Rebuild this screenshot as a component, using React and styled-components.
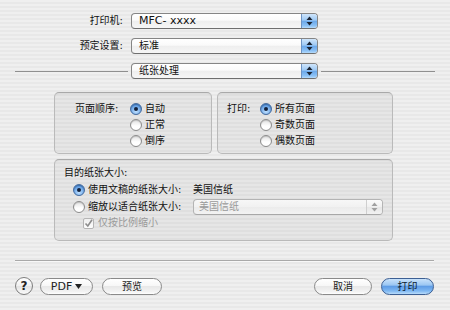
import React from 'react';
import styled, { createGlobalStyle, css } from 'styled-components';

const Global = createGlobalStyle`
  html, body { margin: 0; padding: 0; }
  body {
    font-family: "DejaVu Sans", "Noto Sans CJK SC", sans-serif;
    font-size: 10px;
    color: #111;
  }
`;

const Window = styled.div`
  width: 450px;
  height: 310px;
  box-sizing: border-box;
  padding: 13px 15px 0;
  display: flex;
  flex-direction: column;
  overflow: hidden;
  background: repeating-linear-gradient(to bottom, #efefef 0 2px, #e8e8e8 2px 4px);
`;

const Latin = styled.span`
  font-size: 11px;
`;

const Form = styled.div`
  display: grid;
  grid-template-columns: 110px 187px;
  column-gap: 6px;
  row-gap: 9px;
  align-items: center;
`;

const FieldLabel = styled.div`
  text-align: right;
  line-height: 16px;
  white-space: nowrap;
  padding-right: 2px;
`;

const PaneRow = styled.div`
  display: flex;
  align-items: center;
  margin-top: 9px;
`;

const Rule = styled.div`
  height: 1px;
  background: #8f8f8f;
  ${p => (p.$w ? `width:${p.$w}px;` : 'flex: 1;')}
  ${p => (p.$left ? 'margin-right: 3px;' : 'margin-left: 3px;')}
`;

const PopupBox = styled.div`
  box-sizing: border-box;
  width: ${p => p.$w || 187}px;
  height: 16px;
  display: flex;
  align-items: stretch;
  border: 1px solid ${p => (p.$disabled ? '#b4b4b4' : '#858585')};
  border-bottom-color: ${p => (p.$disabled ? '#a8a8a8' : '#6e6e6e')};
  border-radius: 4px;
  overflow: hidden;
  background: ${p =>
    p.$disabled
      ? 'linear-gradient(to bottom, #f7f7f7, #f1f1f1 50%, #ebebeb 51%, #f3f3f3)'
      : 'linear-gradient(to bottom, #ffffff, #fafafa 45%, #eeeeee 50%, #f6f6f6)'};
  flex-shrink: 0;
`;

const PopupText = styled.div`
  flex: 1;
  padding-left: ${p => (p.$disabled ? 5 : 7)}px;
  line-height: 14px;
  color: ${p => (p.$disabled ? '#9a9a9a' : '#111')};
  white-space: nowrap;
`;

const PopupArrows = styled.div`
  width: 15px;
  display: flex;
  align-items: center;
  justify-content: center;
  border-left: 1px solid ${p => (p.$disabled ? '#cfcfcf' : '#6d93c4')};
  background: ${p =>
    p.$disabled
      ? 'linear-gradient(to bottom, #fafafa, #f0f0f0 50%, #e6e6e6 51%, #f2f2f2)'
      : 'linear-gradient(to bottom, #cfe5fb 0%, #9cc8f4 45%, #6aa7ea 50%, #8cc2f6 85%, #b7dbfb 100%)'};
`;

const Arrows = ({ color }) => (
  <svg width="7" height="10" viewBox="0 0 7 10">
    <path d="M3.5 0.5 L6.5 4 L0.5 4 Z" fill={color} />
    <path d="M0.5 6 L6.5 6 L3.5 9.5 Z" fill={color} />
  </svg>
);

const Popup = ({ children, w, disabled }) => (
  <PopupBox $w={w} $disabled={disabled}>
    <PopupText $disabled={disabled}>{children}</PopupText>
    <PopupArrows $disabled={disabled}>
      <Arrows color={disabled ? '#a0a0a0' : '#1b2433'} />
    </PopupArrows>
  </PopupBox>
);

const GroupRow = styled.div`
  display: flex;
  gap: 5px;
  margin: ${p => p.$mt}px 0 0 39px;
`;

const Group = styled.div`
  box-sizing: border-box;
  width: ${p => p.$w}px;
  height: ${p => p.$h}px;
  border: 1px solid #bababa;
  border-top-color: #a9a9a9;
  border-radius: 5px;
  background: rgba(0, 0, 0, 0.035);
  box-shadow: inset 0 1px 1px rgba(0, 0, 0, 0.05);
`;

const ChoiceGroup = styled(Group)`
  display: grid;
  grid-template-columns: ${p => p.$labelW}px auto;
  align-content: start;
  padding: 8px 0 0 ${p => p.$pad}px;
`;

const GroupLabel = styled.div`
  line-height: 16px;
  white-space: nowrap;
`;

const RadioList = styled.div`
  display: flex;
  flex-direction: column;
`;

const Choice = styled.label`
  display: flex;
  align-items: center;
  gap: 3px;
  height: 16px;
  line-height: 16px;
  white-space: nowrap;
  color: ${p => (p.$disabled ? '#9a9a9a' : '#111')};
`;

const RadioDot = styled.span`
  box-sizing: border-box;
  width: 12px;
  height: 12px;
  border-radius: 50%;
  flex-shrink: 0;
  display: flex;
  align-items: center;
  justify-content: center;
  ${p =>
    p.$on
      ? css`
          border: 1px solid #4b6e9e;
          background: radial-gradient(circle at 50% 75%, #bfe0ff 0%, #7fb4ee 45%, #4d8fdc 80%),
            #5a97de;
          box-shadow: inset 0 1px 1px rgba(0, 0, 0, 0.25);
          &::after {
            content: '';
            width: 4px;
            height: 4px;
            border-radius: 50%;
            background: #14213a;
          }
        `
      : css`
          border: 1px solid #8c8c8c;
          background: linear-gradient(to bottom, #e2e2e2, #ffffff 60%, #ffffff);
          box-shadow: inset 0 1px 1px rgba(0, 0, 0, 0.15);
        `}
`;

const Radio = ({ on, children }) => (
  <Choice>
    <RadioDot $on={on} />
    {children}
  </Choice>
);

const PaperGroup = styled(Group)`
  padding: 5px 0 0 9px;
  display: flex;
  flex-direction: column;
`;

const PaperGrid = styled.div`
  display: grid;
  grid-template-columns: 120px 190px;
  grid-auto-rows: 17px;
  align-items: center;
  margin-left: 9px;
`;

const ValueText = styled.div`
  line-height: 16px;
  white-space: nowrap;
`;

const CheckRow = styled(Choice)`
  margin-left: 19px;
  gap: 4px;
`;

const CheckBox = styled.span`
  box-sizing: border-box;
  width: 11px;
  height: 11px;
  border: 1px solid #b5b5b5;
  border-radius: 2px;
  background: linear-gradient(to bottom, #efefef, #fdfdfd);
  display: flex;
  align-items: center;
  justify-content: center;
  flex-shrink: 0;
`;

const BottomRule = styled.div`
  height: 1px;
  width: 419px;
  background: #a9a9a9;
  margin-top: 19px;
  box-shadow: 0 1px 0 #f8f8f8;
`;

const ButtonBar = styled.div`
  display: flex;
  align-items: center;
  width: 419px;
  margin-top: 16px;
`;

const HelpButton = styled.div`
  box-sizing: border-box;
  width: 18px;
  height: 18px;
  border-radius: 50%;
  border: 1px solid #7d7d7d;
  background: linear-gradient(to bottom, #ffffff, #f0f0f0 50%, #e2e2e2 51%, #fbfbfb);
  display: flex;
  align-items: center;
  justify-content: center;
  font-weight: bold;
  font-size: 12px;
  color: #222;
  margin-right: 7px;
`;

const Button = styled.div`
  box-sizing: border-box;
  width: ${p => p.$w}px;
  height: 17px;
  border-radius: 9px;
  display: flex;
  align-items: center;
  justify-content: center;
  gap: 3px;
  margin-left: ${p => p.$ml || 0}px;
  white-space: nowrap;
  line-height: 15px;
  ${p =>
    p.$default
      ? css`
          border: 1px solid #3c5f93;
          color: #0d1a30;
          background: linear-gradient(
            to bottom,
            #c9e2fb 0%,
            #9cc7f3 40%,
            #5f9de6 50%,
            #7fb8f2 80%,
            #b9dcfb 100%
          );
        `
      : css`
          border: 1px solid #8a8a8a;
          color: #222;
          background: linear-gradient(
            to bottom,
            #ffffff 0%,
            #f7f7f7 45%,
            #e8e8e8 50%,
            #f3f3f3 85%,
            #ffffff 100%
          );
        `}
`;

const Spacer = styled.div`
  flex: 1;
`;

export default function App() {
  return (
    <>
      <Global />
      <Window>
        <Form>
          <FieldLabel>打印机:</FieldLabel>
          <Popup>
            <Latin>MFC- xxxx</Latin>
          </Popup>
          <FieldLabel>预定设置:</FieldLabel>
          <Popup>标准</Popup>
        </Form>
        <PaneRow>
          <Rule $left $w={113} />
          <Popup>纸张处理</Popup>
          <Rule />
        </PaneRow>

        <GroupRow $mt={13}>
          <ChoiceGroup $w={158} $h={62} $pad={20} $labelW={55}>
            <GroupLabel>页面顺序:</GroupLabel>
            <RadioList>
              <Radio on>自动</Radio>
              <Radio>正常</Radio>
              <Radio>倒序</Radio>
            </RadioList>
          </ChoiceGroup>
          <ChoiceGroup $w={176} $h={62} $pad={9} $labelW={33}>
            <GroupLabel>打印:</GroupLabel>
            <RadioList>
              <Radio on>所有页面</Radio>
              <Radio>奇数页面</Radio>
              <Radio>偶数页面</Radio>
            </RadioList>
          </ChoiceGroup>
        </GroupRow>

        <GroupRow $mt={5}>
          <PaperGroup $w={339} $h={82}>
            <GroupLabel>目的纸张大小:</GroupLabel>
            <PaperGrid>
              <Radio on>使用文稿的纸张大小:</Radio>
              <ValueText>美国信纸</ValueText>
              <Radio>缩放以适合纸张大小:</Radio>
              <Popup w={190} disabled>
                美国信纸
              </Popup>
            </PaperGrid>
            <CheckRow $disabled>
              <CheckBox>
                <svg width="9" height="9" viewBox="0 0 9 9">
                  <path
                    d="M1.5 4.5 L3.8 7 L8 0.8"
                    fill="none"
                    stroke="#8d8d8d"
                    strokeWidth="1.6"
                  />
                </svg>
              </CheckBox>
              仅按比例缩小
            </CheckRow>
          </PaperGroup>
        </GroupRow>

        <BottomRule />
        <ButtonBar>
          <HelpButton>?</HelpButton>
          <Button $w={53}>
            <Latin>PDF</Latin>
            <svg width="7" height="5" viewBox="0 0 7 5">
              <path d="M0 0 L7 0 L3.5 5 Z" fill="#222" />
            </svg>
          </Button>
          <Button $w={60} $ml={9}>
            预览
          </Button>
          <Spacer />
          <Button $w={58}>取消</Button>
          <Button $w={53} $ml={9} $default>
            打印
          </Button>
        </ButtonBar>
      </Window>
    </>
  );
}
